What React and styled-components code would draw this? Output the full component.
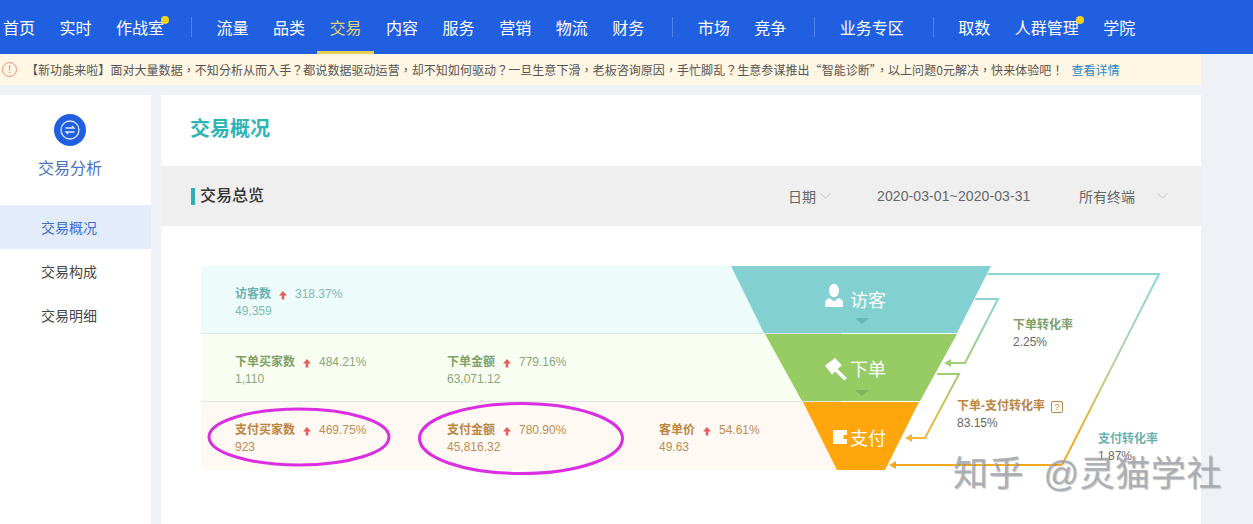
import styled, { createGlobalStyle } from 'styled-components'

const GlobalStyle = createGlobalStyle`
html, body {
    margin: 0;
    padding: 0;
    background: #eef1f6;
}
* {
    box-sizing: border-box;
}
`

const navGroups = [
    { space: 0, items: [{ name: '首页' }, { name: '实时' }, { name: '作战室', dot: true }] },
    {
        space: 27,
        items: [
            { name: '流量' }, { name: '品类' }, { name: '交易', active: true }, { name: '内容' },
            { name: '服务' }, { name: '营销' }, { name: '物流' }, { name: '财务' },
        ],
    },
    { space: 28, items: [{ name: '市场' }, { name: '竞争' }] },
    { space: 28, items: [{ name: '业务专区' }] },
    { space: 29, items: [{ name: '取数' }, { name: '人群管理', dot: true }, { name: '学院' }] },
]

const sideItems = ['交易概况', '交易构成', '交易明细']

const rows = [
    { tone: 'teal', metrics: [{ label: '访客数', pct: '318.37%', value: '49,359' }] },
    {
        tone: 'green',
        metrics: [
            { label: '下单买家数', pct: '484.21%', value: '1,110' },
            { label: '下单金额', pct: '779.16%', value: '63,071.12' },
        ],
    },
    {
        tone: 'orange',
        metrics: [
            { label: '支付买家数', pct: '469.75%', value: '923' },
            { label: '支付金额', pct: '780.90%', value: '45,816.32' },
            { label: '客单价', pct: '54.61%', value: '49.63' },
        ],
    },
]

const rates = [
    { title: '下单转化率', value: '2.25%', tone: 'green', x: 812, y: 50 },
    { title: '下单-支付转化率', value: '83.15%', tone: 'orange', x: 756, y: 131, help: true },
    { title: '支付转化率', value: '1.87%', tone: 'teal', x: 897, y: 164 },
]

const tones = {
    teal: { bg: '#edfbfb', title: '#6db2ae', text: '#7dbab8' },
    green: { bg: '#f8fff2', title: '#7f9f68', text: '#8aa67a' },
    orange: { bg: '#fff9f4', title: '#bd8540', text: '#bd8d55' },
}

function UpArrow() {
    return (
        <svg width="10" height="10" viewBox="0 0 10 10">
            <path d="M5 1 L9 5.4 H6.3 V9.4 H3.7 V5.4 H1 Z" fill="#e4605c" />
        </svg>
    )
}

function Chevron() {
    return (
        <svg width="11" height="6" viewBox="0 0 11 6">
            <path d="M0.5 0.5 L5.5 5 L10.5 0.5" fill="none" stroke="#c4c4c4" strokeWidth="1" />
        </svg>
    )
}

function Funnel() {
    return (
        <Overlay viewBox="201 266 1000 258">
            <defs>
                <linearGradient id="lineOuter" gradientUnits="userSpaceOnUse" x1="0" y1="274" x2="0" y2="465">
                    <stop offset="0" stopColor="#8ed5d5" />
                    <stop offset="0.45" stopColor="#b2d4a8" />
                    <stop offset="0.85" stopColor="#f2ad2a" />
                </linearGradient>
                <linearGradient id="lineOne" gradientUnits="userSpaceOnUse" x1="0" y1="299" x2="0" y2="363">
                    <stop offset="0" stopColor="#8ed5d5" />
                    <stop offset="1" stopColor="#a0cf74" />
                </linearGradient>
                <linearGradient id="lineTwo" gradientUnits="userSpaceOnUse" x1="0" y1="374" x2="0" y2="438">
                    <stop offset="0" stopColor="#a0cf74" />
                    <stop offset="1" stopColor="#f6b53a" />
                </linearGradient>
            </defs>

            <polygon points="731,266 991,266 957,333 764,333" fill="#83d0d0" />
            <polygon points="765,334 957,334 920,401 802,401" fill="#97cb63" />
            <polygon points="803,402 919,402 885,470 837,470" fill="#ffa60d" />

            <polygon points="855,318 869,318 862,324" fill="#63b9b6" />
            <polygon points="855,390 869,390 862,396" fill="#7cb55a" />

            <path d="M988 274 H1159 L1062 465" fill="none" stroke="url(#lineOuter)" strokeWidth="2" />
            <path d="M1062 465 H895" fill="none" stroke="#f2a91e" strokeWidth="2" />
            <polygon points="889,465 896,461 896,469" fill="#f2a91e" />

            <path d="M975 299 H998 L965 363 H950" fill="none" stroke="url(#lineOne)" strokeWidth="2" />
            <polygon points="944,363 951,359 951,367" fill="#a0cf74" />

            <path d="M937 374 H959 L925 438 H911" fill="none" stroke="url(#lineTwo)" strokeWidth="2" />
            <polygon points="905,438 912,434 912,442" fill="#f6b53a" />

            <g fill="#fff">
                <ellipse cx="834" cy="290.5" rx="5" ry="6.8" />
                <path d="M825 307 V302.5 Q825 299.5 829.5 298 L834 301.5 L838.5 298 Q843 299.5 843 302.5 V307 Z" />
                <path d="M825 365.5 L835 358 L842 365.5 L837.5 369 L847 378 L844.5 380.5 L835 371.5 L832 374.5 Z" />
                <path d="M833 430 H847 V435 H843.5 V439 H847 V444 H833 Z" opacity="0.95" />
            </g>

            <FunnelText x="850" y="307">访客</FunnelText>
            <FunnelText x="850" y="376">下单</FunnelText>
            <FunnelText x="850" y="445">支付</FunnelText>

            <ellipse cx="299" cy="437" rx="90" ry="28" fill="none" stroke="#d92fe0" strokeWidth="3" />
            <ellipse cx="521" cy="438.5" rx="101.5" ry="35" fill="none" stroke="#d92fe0" strokeWidth="3" />
        </Overlay>
    )
}

export default function App() {
    return (
        <Page>
            <GlobalStyle />
            <TopNav>
                {navGroups.map((group, i) => (
                    <NavGroup key={i} $space={group.space}>
                        {i > 0 && <NavDivider />}
                        {group.items.map(item => (
                            <NavItem key={item.name} $active={item.active}>
                                {item.name}
                                {item.dot && <NavDot />}
                            </NavItem>
                        ))}
                    </NavGroup>
                ))}
            </TopNav>

            <Notice>
                <NoticeIcon>!</NoticeIcon>
                <NoticeText>
                    【新功能来啦】面对大量数据，不知分析从而入手？都说数据驱动运营，却不知如何驱动？一旦生意下滑，老板咨询原因，手忙脚乱？生意参谋推出“智能诊断”，以上问题0元解决，快来体验吧！
                </NoticeText>
                <NoticeLink>查看详情</NoticeLink>
            </Notice>

            <Body>
                <Sidebar>
                    <SideHead>
                        <SideLogo>
                            <svg width="22" height="22" viewBox="0 0 22 22" fill="none" stroke="#dfe9fb" strokeWidth="1.3">
                                <circle cx="11" cy="11" r="9" />
                                <path d="M6.5 9 H15 L12.8 7" />
                                <path d="M15.5 13 H7 L9.2 15" />
                            </svg>
                        </SideLogo>
                        <SideTitle>交易分析</SideTitle>
                    </SideHead>
                    {sideItems.map((item, i) => (
                        <SideItem key={item} $active={i === 0}>{item}</SideItem>
                    ))}
                </Sidebar>

                <Main>
                    <PageTitle>交易概况</PageTitle>
                    <SectionBar>
                        <SectionTitle>交易总览</SectionTitle>
                        <Filters>
                            <DateFilter>日期<Chevron /></DateFilter>
                            <DateRange>2020-03-01~2020-03-31</DateRange>
                            <DeviceFilter>所有终端<Chevron /></DeviceFilter>
                        </Filters>
                    </SectionBar>

                    <Board>
                        {rows.map(row => (
                            <Row key={row.tone} $tone={row.tone}>
                                {row.metrics.map(m => (
                                    <Metric key={m.label} $tone={row.tone}>
                                        <MetricTop>
                                            <MetricLabel $tone={row.tone}>{m.label}</MetricLabel>
                                            <UpArrow />
                                            <span>{m.pct}</span>
                                        </MetricTop>
                                        <div>{m.value}</div>
                                    </Metric>
                                ))}
                            </Row>
                        ))}
                        <Funnel />
                        {rates.map(rate => (
                            <Rate key={rate.title} $x={rate.x} $y={rate.y}>
                                <RateTitle $tone={rate.tone}>
                                    {rate.title}
                                    {rate.help && <HelpMark>?</HelpMark>}
                                </RateTitle>
                                <div>{rate.value}</div>
                            </Rate>
                        ))}
                    </Board>
                </Main>
            </Body>

            <Watermark>知乎 @灵猫学社</Watermark>
        </Page>
    )
}

const Page = styled.div`
position: relative;
width: 1253px;
height: 524px;
overflow: hidden;
background: #eef1f6;
font-family: "Liberation Sans", "Noto Sans CJK SC", sans-serif;
`

const TopNav = styled.div`
display: flex;
height: 54px;
padding-left: 3px;
background: #1f5fe0;
`

const NavGroup = styled.div`
display: flex;
align-items: center;
gap: 24.5px;
margin-left: ${props => props.$space}px;
`

const NavDivider = styled.div`
width: 1px;
height: 20px;
background: rgba(255, 255, 255, 0.22);
`

const NavItem = styled.div`
position: relative;
height: 54px;
line-height: 57px;
font-size: 16px;
color: ${props => props.$active ? '#e6d36c' : '#fff'};
&::after {
    content: '';
    display: ${props => props.$active ? 'block' : 'none'};
    position: absolute;
    left: -13px;
    right: -12px;
    bottom: 0;
    height: 3px;
    background: #e6cf55;
}
`

const NavDot = styled.span`
position: absolute;
top: 16px;
right: -5px;
width: 8px;
height: 8px;
border-radius: 50%;
background: #f2d21f;
`

const Notice = styled.div`
display: flex;
align-items: center;
width: 1201px;
height: 31px;
padding-left: 2px;
background: #fff6e3;
font-family: "Noto Sans CJK TC", sans-serif;
font-size: 12px;
color: #555;
`

const NoticeIcon = styled.div`
width: 15px;
height: 15px;
margin-right: 9px;
border: 1.5px solid #ee8a76;
border-radius: 50%;
line-height: 12px;
text-align: center;
font-size: 10px;
color: #e8705a;
`

const NoticeText = styled.div`
white-space: nowrap;
margin-right: 8px;
letter-spacing: 0.055px;
`

const NoticeLink = styled.div`
color: #2a86c4;
`

const Body = styled.div`
display: flex;
gap: 10px;
width: 1201px;
height: 439px;
margin-top: 10px;
`

const Sidebar = styled.div`
flex: none;
width: 151px;
background: #fff;
`

const SideHead = styled.div`
display: flex;
flex-direction: column;
align-items: center;
height: 110px;
padding-top: 19px;
margin-right: 11px;
`

const SideLogo = styled.div`
display: flex;
align-items: center;
justify-content: center;
width: 32px;
height: 32px;
border-radius: 50%;
background: #1f5fe0;
`

const SideTitle = styled.div`
margin-top: 11px;
font-size: 16px;
line-height: 24px;
color: #4a72c0;
`

const SideItem = styled.div`
height: 44px;
padding-left: 41px;
line-height: 46px;
font-size: 14px;
color: ${props => props.$active ? '#3d6fc9' : '#444'};
background: ${props => props.$active ? '#e3ecfa' : 'transparent'};
`

const Main = styled.div`
flex: 1;
background: #fff;
`

const PageTitle = styled.div`
height: 71px;
padding: 21px 0 0 29px;
font-size: 20px;
line-height: 26px;
font-weight: 700;
color: #2db4b6;
`

const SectionBar = styled.div`
display: flex;
align-items: center;
justify-content: space-between;
height: 60px;
padding-left: 30px;
background: #efefef;
`

const SectionTitle = styled.div`
height: 17px;
padding-left: 5px;
border-left: 4px solid #2db0b4;
line-height: 16px;
font-size: 16px;
font-weight: 500;
color: #333;
`

const Filters = styled.div`
display: flex;
align-items: center;
font-size: 14px;
color: #666;
`

const DateFilter = styled.div`
display: flex;
align-items: center;
gap: 4px;
width: 89px;
`

const DateRange = styled.div`
width: 202px;
letter-spacing: 0.1px;
`

const DeviceFilter = styled.div`
display: flex;
align-items: center;
gap: 22px;
width: 122px;
`

const Board = styled.div`
position: relative;
width: 1000px;
height: 258px;
margin: 40px 0 0 40px;
`

const Row = styled.div`
display: flex;
width: 640px;
height: 68px;
padding: 20px 0 0 34px;
background: ${props => tones[props.$tone].bg};
border-bottom: 1px solid ${props => props.$tone === 'orange' ? 'transparent' : '#dfe6e2'};
`

const Metric = styled.div`
flex: none;
width: 212px;
font-size: 12px;
line-height: 17px;
color: ${props => tones[props.$tone].text};
`

const MetricTop = styled.div`
display: flex;
align-items: center;
gap: 7px;
`

const MetricLabel = styled.span`
font-weight: 700;
color: ${props => tones[props.$tone].title};
`

const Overlay = styled.svg`
position: absolute;
left: 0;
top: 0;
width: 1000px;
height: 258px;
pointer-events: none;
`

const FunnelText = styled.text`
font-size: 18px;
fill: #fff;
`

const Rate = styled.div`
position: absolute;
left: ${props => props.$x}px;
top: ${props => props.$y + 1}px;
font-size: 12px;
line-height: 17px;
white-space: nowrap;
color: #666;
`

const RateTitle = styled.div`
display: flex;
align-items: center;
gap: 6px;
font-weight: 700;
color: ${props => tones[props.$tone].title};
`

const HelpMark = styled.span`
width: 12px;
height: 12px;
border: 1px solid #bd8540;
border-radius: 2px;
line-height: 10px;
text-align: center;
font-size: 9px;
font-weight: 400;
`

const Watermark = styled.div`
position: absolute;
top: 452px;
left: 953px;
font-size: 35px;
line-height: 44px;
letter-spacing: 0.6px;
word-spacing: 9px;
white-space: nowrap;
color: rgba(165, 168, 175, 0.85);
text-shadow: 1px 1px 1px rgba(90, 90, 95, 0.35);
`
